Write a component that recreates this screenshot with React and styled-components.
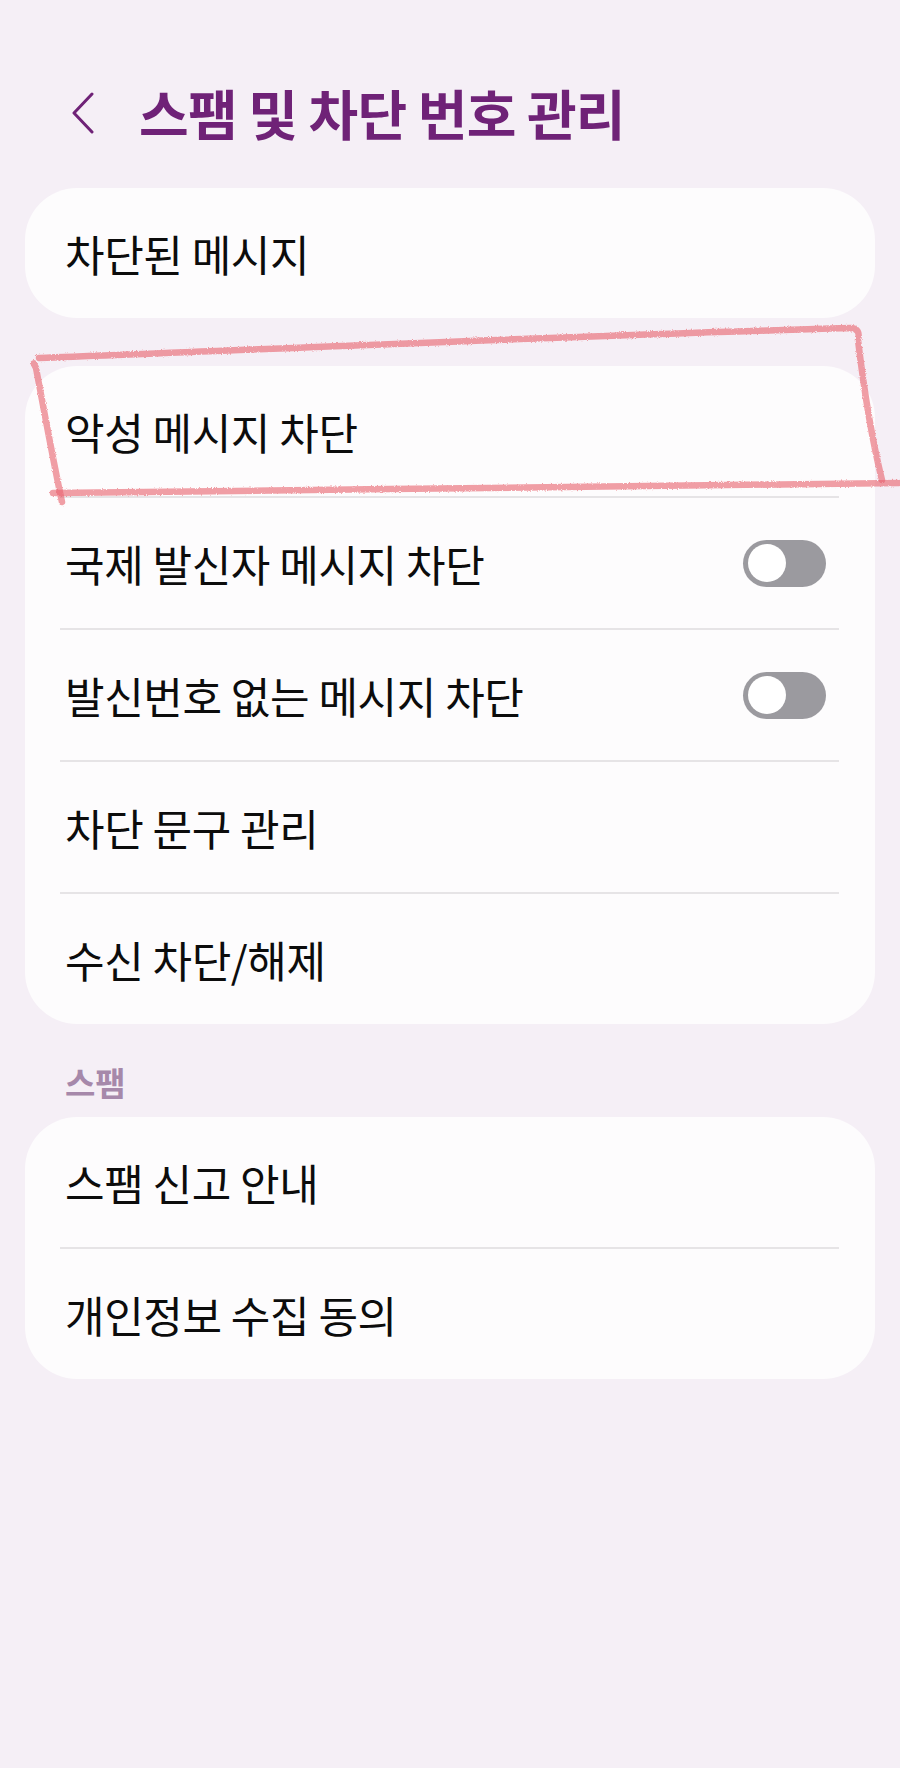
import styled, { createGlobalStyle } from 'styled-components';

const GlobalStyle = createGlobalStyle`
  html, body {
    margin: 0;
    padding: 0;
    background: #f5eff6;
  }
  body {
    font-family: "Noto Sans CJK KR", "Noto Sans", sans-serif;
    color: #0c0c0c;
    -webkit-font-smoothing: antialiased;
  }
`;

const Page = styled.div`
  position: relative;
  min-height: 1768px;
  padding: 0 25px;
  box-sizing: border-box;
`;

const Header = styled.header`
  height: 188px;
  box-sizing: border-box;
  padding: 38px 0 0 45px;
  display: flex;
  align-items: center;
  gap: 44px;
`;

const BackButton = styled.button`
  border: 0;
  background: none;
  padding: 0;
  display: flex;
  color: #6f2277;
`;

const Title = styled.h1`
  margin: 0;
  font-size: 54px;
  font-weight: 700;
  letter-spacing: -0.8px;
  color: #6f2277;
  line-height: 1;
`;

const Card = styled.section`
  background: #fdfcfd;
  border-radius: 52px;
  overflow: hidden;
  margin-bottom: ${(p) => p.$gap || 0}px;
`;

const Row = styled.div`
  height: 130px;
  display: flex;
  align-items: center;
  justify-content: space-between;
  padding: 0 49px 0 40px;
`;

const Label = styled.span`
  font-size: 43px;
  font-weight: 400;
  letter-spacing: -0.4px;
  line-height: 1;
`;

const Divider = styled.div`
  height: 2px;
  margin: 0 36px 0 35px;
  background: #e6e4e6;
`;

const Toggle = styled.span`
  position: relative;
  width: 83px;
  height: 47px;
  border-radius: 24px;
  background: #9b9a9f;
  flex-shrink: 0;
  &::after {
    content: '';
    position: absolute;
    left: 5px;
    top: 4.5px;
    width: 38px;
    height: 38px;
    border-radius: 50%;
    background: #ffffff;
  }
`;

const SectionLabel = styled.h2`
  margin: 0;
  height: 93px;
  box-sizing: border-box;
  padding: 40px 40px 0;
  font-size: 33px;
  line-height: 36px;
  font-weight: 700;
  color: #a688aa;
`;

const Scribble = styled.svg`
  position: absolute;
  left: 0;
  top: 0;
  width: 900px;
  height: 520px;
  pointer-events: none;
`;

const blocking = [
  { label: '악성 메시지 차단' },
  { label: '국제 발신자 메시지 차단', toggle: true },
  { label: '발신번호 없는 메시지 차단', toggle: true },
  { label: '차단 문구 관리' },
  { label: '수신 차단/해제' },
];

const spam = ['스팸 신고 안내', '개인정보 수집 동의'];

function List({ items }) {
  return items.map((item, i) => (
    <div key={item.label}>
      {i > 0 && <Divider />}
      <Row>
        <Label>{item.label}</Label>
        {item.toggle && <Toggle />}
      </Row>
    </div>
  ));
}

export default function App() {
  return (
    <>
      <GlobalStyle />
      <Page>
        <Header>
          <BackButton aria-label="뒤로">
            <svg width="25" height="42" viewBox="0 0 25 42" fill="none">
              <path d="M22 2 L4 21 L22 40" stroke="currentColor" strokeWidth="3" strokeLinecap="round" strokeLinejoin="round" />
            </svg>
          </BackButton>
          <Title>스팸 및 차단 번호 관리</Title>
        </Header>

        <Card $gap={48}>
          <Row>
            <Label>차단된 메시지</Label>
          </Row>
        </Card>

        <Card>
          <List items={blocking} />
        </Card>

        <SectionLabel>스팸</SectionLabel>

        <Card>
          <List items={spam.map((label) => ({ label }))} />
        </Card>

        <Scribble viewBox="0 0 900 520">
          <defs>
            <filter id="pencil" x="-5%" y="-5%" width="110%" height="110%">
              <feTurbulence type="fractalNoise" baseFrequency="1.2" numOctaves="2" result="noise" />
              <feDisplacementMap in="SourceGraphic" in2="noise" scale="3" />
            </filter>
          </defs>
          <g fill="none" stroke="#e8646f" strokeOpacity="0.62" strokeWidth="6.5" strokeLinecap="round" strokeLinejoin="round" filter="url(#pencil)">
            <path d="M39 358 C 250 350, 560 336, 851 328 Q 861 329 858 340 C 864 390, 872 440, 882 480" />
            <path d="M899 483 C 640 486, 330 490, 53 493" />
            <path d="M34 364 Q 33 362 36 368 C 44 410, 52 455, 62 502" />
          </g>
        </Scribble>
      </Page>
    </>
  );
}
